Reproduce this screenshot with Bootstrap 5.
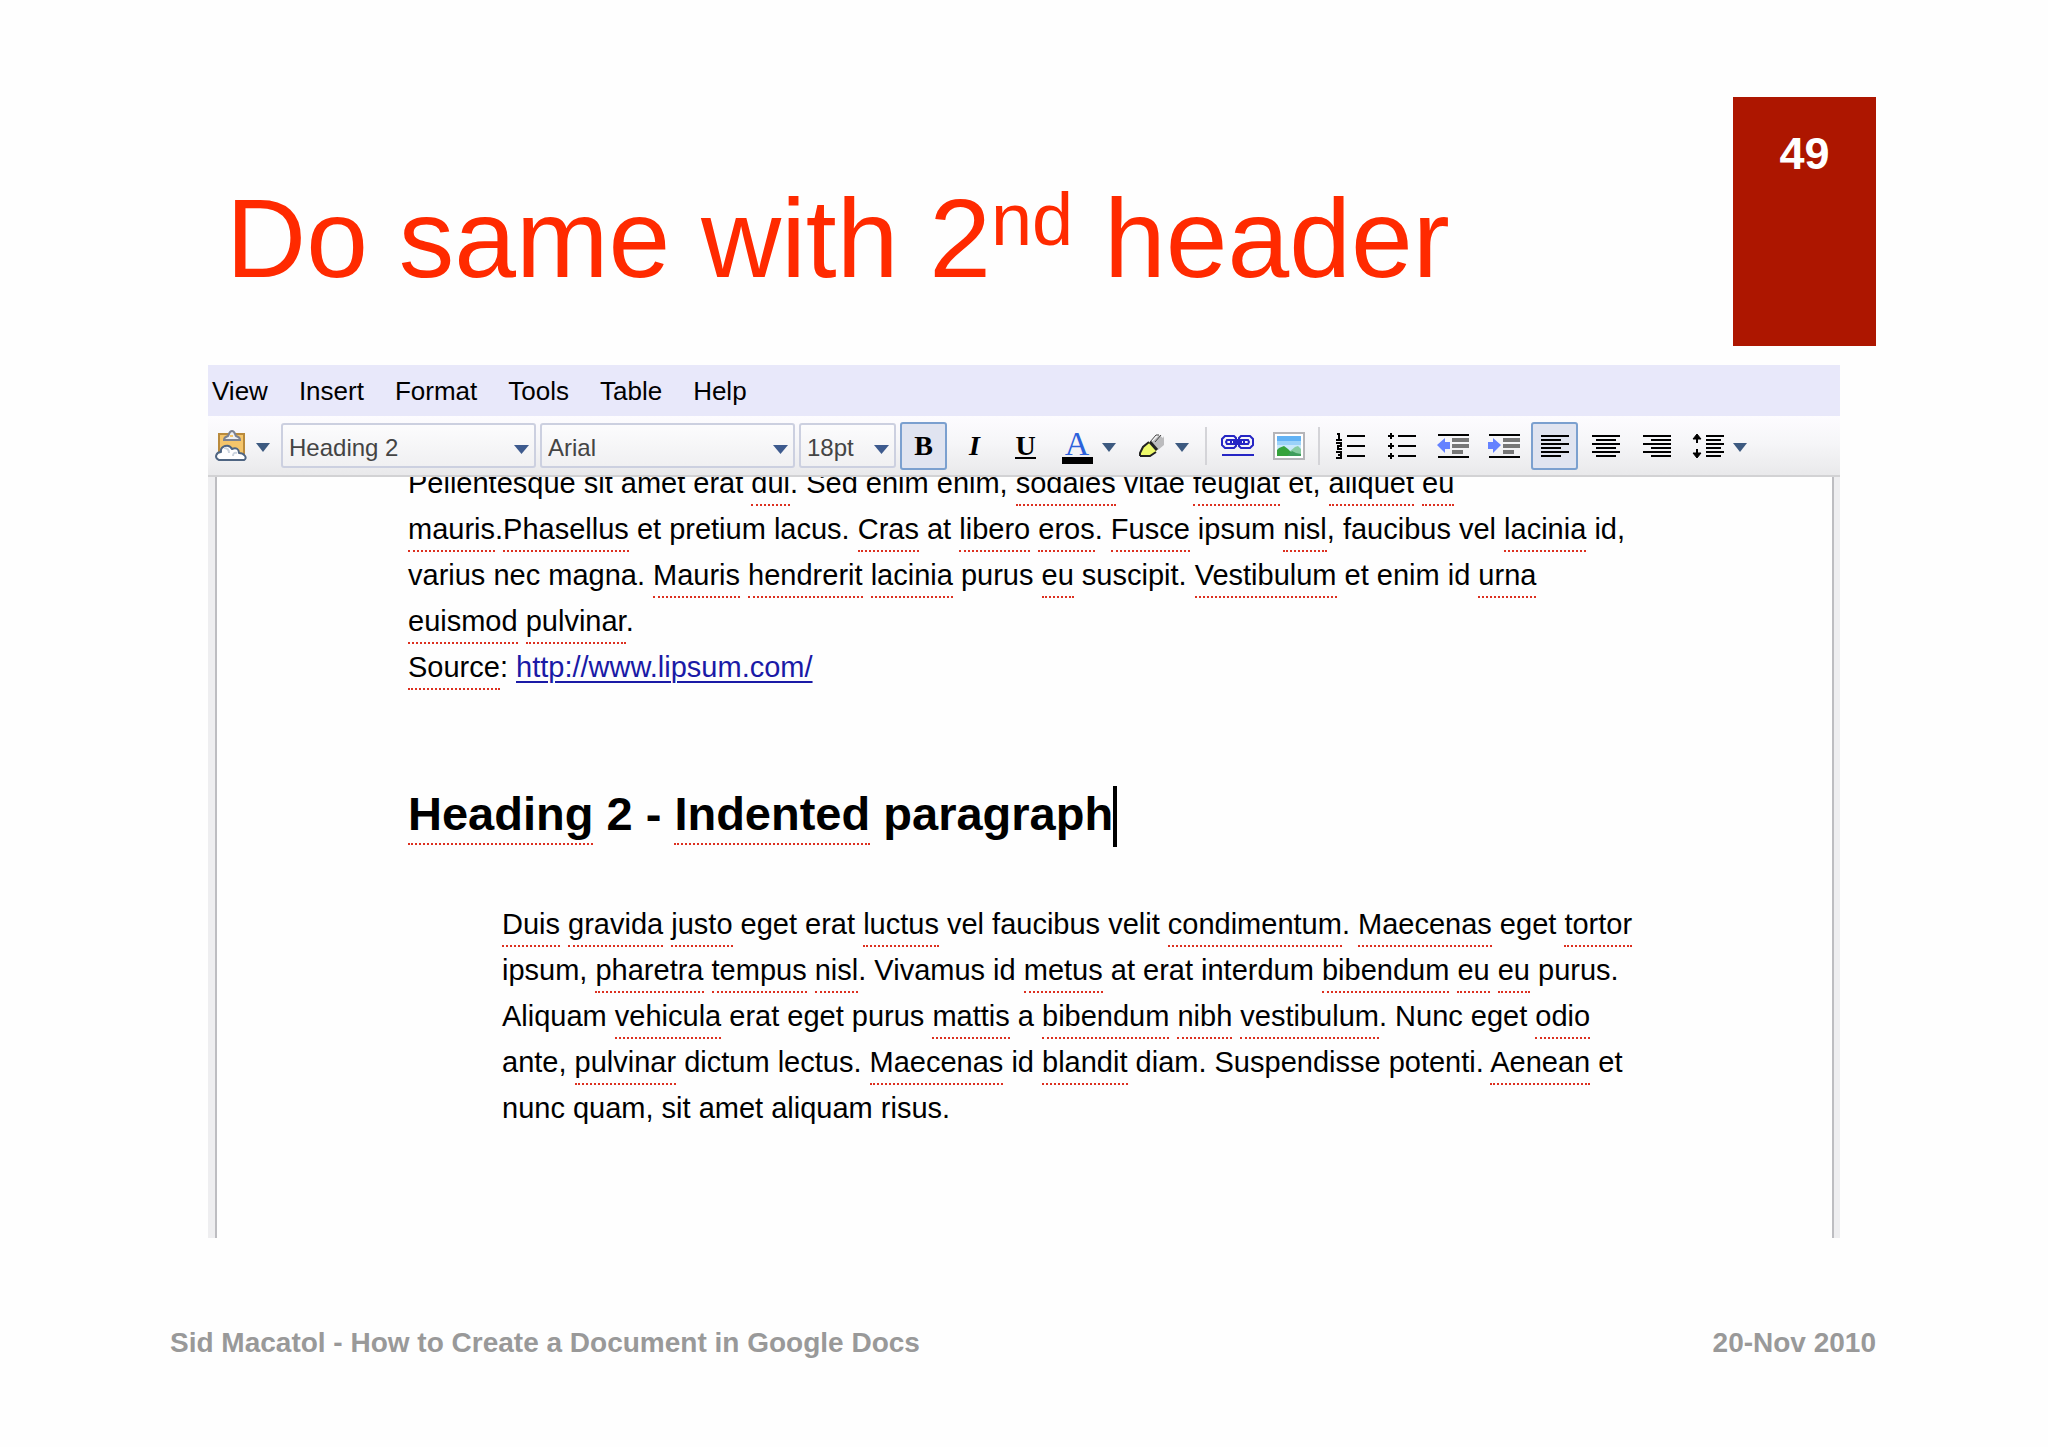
<!DOCTYPE html>
<html lang="en">
<head>
<meta charset="utf-8">
<meta name="viewport" content="width=device-width, initial-scale=1">
<title>Do same with 2nd header</title>
<link rel="stylesheet" href="https://cdn.jsdelivr.net/npm/bootstrap@5.3.0/dist/css/bootstrap.min.css">
<style>
  body { background: #fefefe; color: #000; font-family: "Liberation Sans", Arial, sans-serif; }
  .slide { padding: 97px 172px 40px 170px; }
  .slide-title { color: #ff2a00; font-size: 111px; line-height: 124px; font-weight: 400; margin: 80px 0 0 56px; }
  .slide-title sup { font-size: 74px; line-height: 0; top: 0; vertical-align: 32px; }
  .slide-number { background: #ad1600; color: #fff; width: 143px; height: 249px; padding-top: 31px; font-size: 45px; line-height: 52px; }
  .editor { margin: 19px 36px 0 38px; }
  .menu-strip { background: #e8e8fa; height: 51px; gap: 31px; padding: 0 4px; }
  .menu-strip .btn { font-size: 26px; line-height: 30px; color: #000; }
  .tool-strip { height: 61px; gap: 4px; padding: 0 7px 0 5px; background: linear-gradient(#fdfcff, #f6f6f8 45%, #e9e9eb); border-bottom: 2px solid #d2d2d4; }
  .tool-strip .form-select {
    height: 45px; padding: 4px 26px 0 6px; font-size: 24px; line-height: 30px; color: #444; border: 2px solid #ccd0e0; border-radius: 3px;
    background: url("data:image/svg+xml,%3Csvg xmlns='http://www.w3.org/2000/svg' viewBox='0 0 15 9'%3E%3Cpath d='M0 0h15L7.5 9z' fill='%233d5a8e'/%3E%3C/svg%3E") right 5px top 20px / 15px 9px no-repeat, linear-gradient(#fcfcfd, #f0f0f2);
  }
  .wide-pick { width: 255px; }
  .size-pick { width: 97px; }
  .tool { width: 47px; height: 48px; border: 2px solid transparent; border-radius: 3px; font-family: "Liberation Serif", "Times New Roman", serif; font-size: 28px; line-height: 30px; color: #000; }
  .tool-menu { width: 71px; gap: 9px; }
  .clip-menu { width: 64px; }
  .tool.active { background: #e0e4f0; border-color: #7ba0cf; }
  .tool svg { display: block; flex: none; }
  .tool .drop { margin-top: 4px; }
  .rule-under { border-bottom: 2px solid #000; line-height: 23px; }
  .ink { color: #2c62dc; font-size: 34px; line-height: 26px; border-bottom: 7px solid #000; width: 31px; margin-top: 4px; }
  .divide { width: 2px; height: 38px; background: #d4d4d8; margin: 0 3px 0 2px; }
  .sheet { border: solid #eeeef0; border-width: 0 6px 0 7px; }
  .sheet-page { border: solid #bdbdc1; border-width: 0 2px; padding: 0 100px 107px 191px; overflow: hidden; }
  .passage { font-size: 29px; line-height: 46px; }
  .scrolled { margin-top: -17px; }
  .doc-heading { font-size: 47px; line-height: 60px; font-weight: 700; margin: 94px 0 54px; }
  .indented { margin-left: 94px; }
  .typo { border-bottom: 2px dotted #dc3020; padding-bottom: 5px; }
  .doc-heading .typo { padding-bottom: 3px; }
  .passage a { color: #1a1aa6; text-decoration-thickness: 2px; text-underline-offset: 4px; }
  .caret { display: inline-block; width: 4px; height: 61px; background: #000; vertical-align: -17px; }
  .slide-foot { color: #999; font-size: 28px; line-height: 32px; margin-top: 89px; }
</style>
</head>
<body>
<div class="slide">
  <header class="d-flex justify-content-between align-items-start">
    <h1 class="slide-title">Do same with 2<sup>nd</sup> header</h1>
    <div class="slide-number text-center fw-bold">49</div>
  </header>

  <main class="editor">
    <nav class="menu-strip d-flex align-items-center" aria-label="Document menu">
      <button type="button" class="btn border-0 p-0">View</button>
      <button type="button" class="btn border-0 p-0">Insert</button>
      <button type="button" class="btn border-0 p-0">Format</button>
      <button type="button" class="btn border-0 p-0">Tools</button>
      <button type="button" class="btn border-0 p-0">Table</button>
      <button type="button" class="btn border-0 p-0">Help</button>
    </nav>

    <div class="tool-strip d-flex align-items-center" role="toolbar" aria-label="Formatting">
      <button type="button" class="tool clip-menu btn p-0 d-flex align-items-center gap-2" aria-label="Web clipboard">
        <svg width="33" height="32" viewBox="0 0 33 32"><path d="M4 4h25v24H4z" fill="#f5c56a" stroke="#b98a3c" stroke-width="2"/><path d="M9 10c0-3 2-3 4-4 1-1 1-5 4-5s3 4 4 5c2 1 4 1 4 4z" fill="#eef0f2" stroke="#7c8290" stroke-width="2"/><path d="M15 5h3v2h-3z" fill="#f5c56a"/><path d="M4 30c-5-2-3-8 2-8-1-6 8-9 11-3 4-2 7 0 7 4 5 0 9 5 5 7z" fill="#fff" stroke="#4f6582" stroke-width="2" stroke-linejoin="round"/><path d="M9 18c3 0 5 2 5 5m8 0c-3-1-4 1-4 3" fill="none" stroke="#ccd4de" stroke-width="2"/></svg>
        <svg class="drop" width="14" height="9" viewBox="0 0 14 9"><path d="M0 0h14L7 9z" fill="#3d5a80"/></svg>
      </button>
      <select class="form-select wide-pick" aria-label="Paragraph style"><option>Heading 2</option></select>
      <select class="form-select wide-pick" aria-label="Font"><option>Arial</option></select>
      <select class="form-select size-pick" aria-label="Font size"><option>18pt</option></select>
      <button type="button" class="tool btn p-0 active fw-bold" aria-label="Bold">B</button>
      <button type="button" class="tool btn p-0 fst-italic fw-bold" aria-label="Italic">I</button>
      <button type="button" class="tool btn p-0 fw-bold" aria-label="Underline"><span class="rule-under d-inline-block">U</span></button>
      <button type="button" class="tool tool-menu btn p-0 d-flex align-items-center justify-content-center" aria-label="Text colour">
        <span class="ink">A</span>
        <svg class="drop" width="14" height="9" viewBox="0 0 14 9"><path d="M0 0h14L7 9z" fill="#3d5a80"/></svg>
      </button>
      <button type="button" class="tool tool-menu btn p-0 d-flex align-items-center justify-content-center" aria-label="Highlight colour">
        <svg width="28" height="24" viewBox="0 0 28 24"><path d="M16 6l5-5 4 3 1-2v9l-6 5-7-8z" fill="#bcbcbe"/><path d="M12 8l6-7h3M17 8l6-7" fill="none" stroke="#444" stroke-width="1"/><path d="M2 22v-3l3-6 6-5h2l6 7-1 3-6 4z" fill="#eefa6c"/><path d="M2 22v-3l3-6 6-5M2 22h10l6-4" fill="none" stroke="#222" stroke-width="2"/><path d="M12 8l7 8" stroke="#222" stroke-width="3"/></svg>
        <svg class="drop" width="14" height="9" viewBox="0 0 14 9"><path d="M0 0h14L7 9z" fill="#3d5a80"/></svg>
      </button>
      <span class="divide"></span>
      <button type="button" class="tool btn p-0 d-flex align-items-center justify-content-center" aria-label="Link">
        <svg width="33" height="22" viewBox="0 0 33 22" fill="none" stroke="#2626c4" stroke-width="2"><path d="M15 4V3l-2-2H4L1 4v6l3 3h9l2-2v-1M18 4V3l2-2h9l3 3v6l-3 3h-9l-2-2v-1"/><path d="M10 5H6L5 7l1 2h4M23 5h4l1 2-1 2h-4"/><path d="M10 5h13v4H10z"/><path d="M12 7h9"/><path d="M1 20h32"/></svg>
      </button>
      <button type="button" class="tool btn p-0 d-flex align-items-center justify-content-center" aria-label="Image">
        <svg width="32" height="28" viewBox="0 0 32 28"><path d="M1 1h30v26H1z" fill="#fff" stroke="#b5b5b9" stroke-width="2"/><path d="M4 4h24v20H4z" fill="#62b2f4"/><path d="M4 9h24v15H4z" fill="#9bd2f9"/><path d="M4 13h24v11H4z" fill="#c8e8fb"/><path d="M16 20l6-5 3-1 3 3v7H16z" fill="#86cba0"/><path d="M4 18l2-2 5-2 4 3 3 3 4 1v3H4z" fill="#35a23c"/><path d="M14 24l5-5 4 2 5 1v2z" fill="#3f9c5c"/></svg>
      </button>
      <span class="divide"></span>
      <button type="button" class="tool btn p-0 d-flex align-items-center justify-content-center" aria-label="Numbered list">
        <svg width="30" height="28" viewBox="0 0 30 28" fill="none" stroke="#000" stroke-width="2"><path d="M11 4h18M11 14h18M11 24h18"/><path d="M1 2h2v5M0 8h6M0 11h5v3H2v3h4M0 20h5v6H0M2 23h3"/></svg>
      </button>
      <button type="button" class="tool btn p-0 d-flex align-items-center justify-content-center" aria-label="Bulleted list">
        <svg width="30" height="28" viewBox="0 0 30 28" stroke="#000" stroke-width="2"><path d="M11 4h18M11 14h18M11 24h18"/><path d="M4 1v6M4 11v6M4 21v6M1 4h6M1 14h6M1 24h6"/></svg>
      </button>
      <button type="button" class="tool btn p-0 d-flex align-items-center justify-content-center" aria-label="Decrease indent">
        <svg width="32" height="26" viewBox="0 0 32 26"><path d="M1 1h31v2H1zM1 23h31v2H1z"/><path d="M15 5h17v4H15zM15 11h17v4H15zM15 17h11v4H15z" fill="#777"/><path d="M0 12l8-7v4h5v7H8v4z" fill="#6482ff"/></svg>
      </button>
      <button type="button" class="tool btn p-0 d-flex align-items-center justify-content-center" aria-label="Increase indent">
        <svg width="32" height="26" viewBox="0 0 32 26"><path d="M1 1h31v2H1zM1 23h31v2H1z"/><path d="M15 5h17v4H15zM15 11h17v4H15zM15 17h11v4H15z" fill="#777"/><path d="M13 12L5 5v4H0v7h5v4z" fill="#6482ff"/></svg>
      </button>
      <button type="button" class="tool btn p-0 active d-flex align-items-center justify-content-center" aria-label="Align left">
        <svg width="28" height="24" viewBox="0 0 28 24" stroke="#000" stroke-width="2"><path d="M0 2h28M0 6h20M0 10h28M0 14h20M0 18h28M0 22h20"/></svg>
      </button>
      <button type="button" class="tool btn p-0 d-flex align-items-center justify-content-center" aria-label="Align centre">
        <svg width="28" height="24" viewBox="0 0 28 24" stroke="#000" stroke-width="2"><path d="M0 2h28M4 6h20M0 10h28M4 14h20M0 18h28M4 22h20"/></svg>
      </button>
      <button type="button" class="tool btn p-0 d-flex align-items-center justify-content-center" aria-label="Align right">
        <svg width="28" height="24" viewBox="0 0 28 24" stroke="#000" stroke-width="2"><path d="M0 2h28M8 6h20M0 10h28M8 14h20M0 18h28M8 22h20"/></svg>
      </button>
      <button type="button" class="tool tool-menu btn p-0 d-flex align-items-center justify-content-center" aria-label="Line spacing">
        <svg width="32" height="26" viewBox="0 0 32 26" stroke="#000" stroke-width="2"><path d="M14 3h18M14 7h15M14 11h18M14 15h15M14 19h18M14 23h15"/><path d="M5 2v8M5 16v8"/><path d="M5 1l4 5H1zM5 25l4-5H1z" stroke-width="1"/></svg>
        <svg class="drop" width="14" height="9" viewBox="0 0 14 9"><path d="M0 0h14L7 9z" fill="#3d5a80"/></svg>
      </button>
    </div>

    <div class="sheet">
      <article class="sheet-page">
        <p class="passage scrolled mb-0 text-nowrap">Pellentesque sit amet erat <span class="typo">dui</span>. Sed enim enim, <span class="typo">sodales</span> vitae <span class="typo">feugiat</span> et, <span class="typo">aliquet</span> <span class="typo">eu</span><br>
          <span class="typo">mauris</span>.<span class="typo">Phasellus</span> et pretium lacus. <span class="typo">Cras</span> at <span class="typo">libero</span> <span class="typo">eros</span>. <span class="typo">Fusce</span> ipsum <span class="typo">nisl</span>, faucibus vel <span class="typo">lacinia</span> id,<br>
          varius nec magna. <span class="typo">Mauris</span> <span class="typo">hendrerit</span> <span class="typo">lacinia</span> purus <span class="typo">eu</span> suscipit. <span class="typo">Vestibulum</span> et enim id <span class="typo">urna</span><br>
          <span class="typo">euismod</span> <span class="typo">pulvinar</span>.<br>
          <span class="typo">Source</span>: <a href="#">http://www.lipsum.com/</a></p>
        <h2 class="doc-heading text-nowrap"><span class="typo">Heading</span> 2 - <span class="typo">Indented</span> paragraph<span class="caret"></span></h2>
        <p class="passage indented mb-0 text-nowrap"><span class="typo">Duis</span> <span class="typo">gravida</span> <span class="typo">justo</span> eget erat <span class="typo">luctus</span> vel faucibus velit <span class="typo">condimentum</span>. <span class="typo">Maecenas</span> eget <span class="typo">tortor</span><br>
          ipsum, <span class="typo">pharetra</span> <span class="typo">tempus</span> <span class="typo">nisl</span>. Vivamus id <span class="typo">metus</span> at erat interdum <span class="typo">bibendum</span> <span class="typo">eu</span> <span class="typo">eu</span> purus.<br>
          Aliquam <span class="typo">vehicula</span> erat eget purus <span class="typo">mattis</span> a <span class="typo">bibendum</span> <span class="typo">nibh</span> <span class="typo">vestibulum</span>. Nunc eget <span class="typo">odio</span><br>
          ante, <span class="typo">pulvinar</span> dictum lectus. <span class="typo">Maecenas</span> id <span class="typo">blandit</span> diam. Suspendisse potenti. <span class="typo">Aenean</span> et<br>
          nunc quam, sit amet aliquam risus.</p>
      </article>
    </div>
  </main>

  <footer class="slide-foot d-flex justify-content-between fw-bold">
    <span>Sid Macatol - How to Create a Document in Google Docs</span>
    <span>20-Nov 2010</span>
  </footer>
</div>
<script src="https://cdn.jsdelivr.net/npm/bootstrap@5.3.0/dist/js/bootstrap.bundle.min.js"></script>
</body>
</html>
